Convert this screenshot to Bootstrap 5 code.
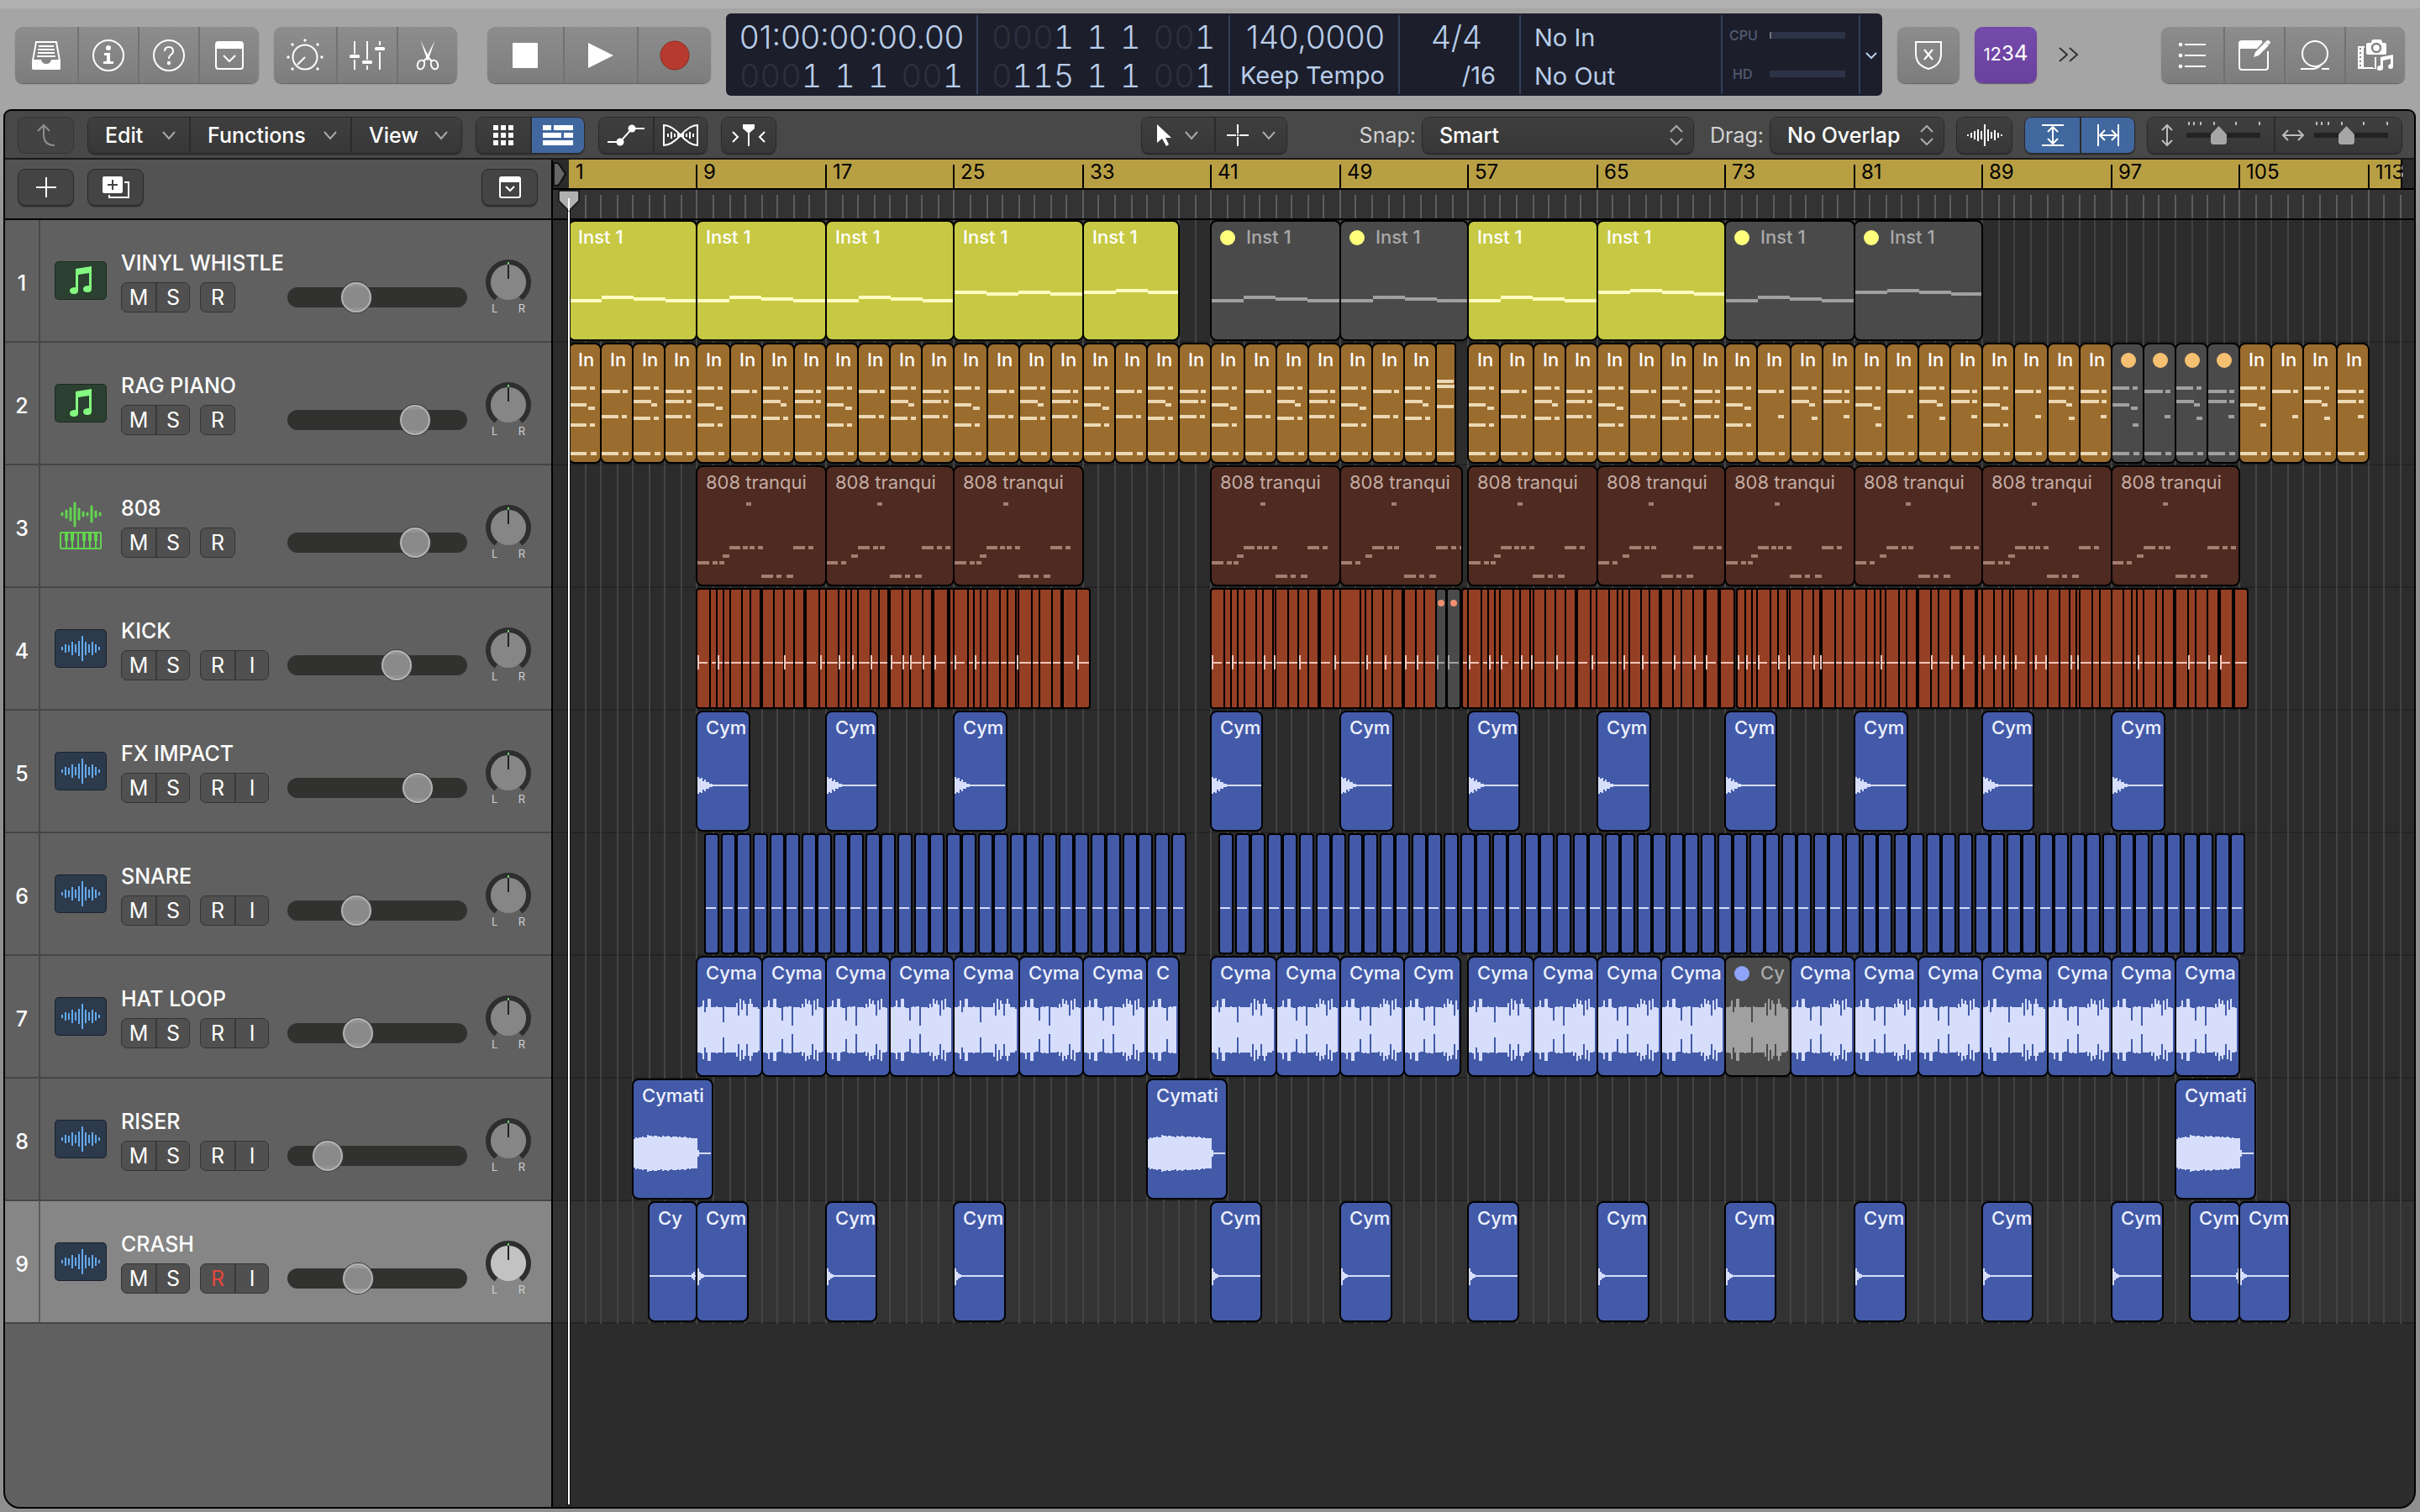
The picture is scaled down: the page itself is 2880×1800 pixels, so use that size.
<!DOCTYPE html>
<html lang="en">
<head>
<meta charset="utf-8">
<meta name="viewport" content="width=device-width, initial-scale=1">
<title>Arrangement</title>
<link href="https://cdn.jsdelivr.net/npm/bootstrap@5.3.0/dist/css/bootstrap.min.css" rel="stylesheet">
<style>
body{font-family:Inter,"Liberation Sans",sans-serif;font-size:25px;line-height:30px;color:#fff;background:linear-gradient(#b1b1b1 10px,#a5a5a5 10px,#a5a5a5 130px,#8f8f8f 300px);overflow:hidden}
button{font:inherit;color:inherit;padding:0;border:0;background:none}
svg{display:block;flex:none;overflow:visible}
.ln{fill:none;stroke:currentColor;stroke-width:2}
.fl{fill:currentColor;stroke:none}

/* control bar */
.controlbar{height:130px;padding:16px 18px 0;gap:18px}
.cluster{height:67px;margin-top:16px;border-radius:9px;background:linear-gradient(#8d8d8d,#7d7d7d);box-shadow:0 1px 1px #5e5e5e;overflow:hidden}
.cluster button{width:72px;height:67px;display:flex;align-items:center;justify-content:center}
.cluster button:first-child{width:74px}
.cluster button+button{border-left:2px solid #717171}
.cluster.transport{margin-left:18px}
.cluster.transport button{width:88px}
.cluster.transport button:first-child{width:90px}
.cluster.purple{background:linear-gradient(#744aab,#6a409f)}
.n1{font-size:20px}.n2{font-size:22px}.n3{font-size:24px}.n4{font-size:26px}
.more{margin:31px 0 0 8px;color:#333}
.lcd{height:98px;border-radius:6px;background:#1c1e2b;color:#b9cde8;font-weight:300}
.lcd>div{height:94px;margin:2px 0;padding-top:3px;border-right:2px solid #33405a;display:flex;flex-direction:column;justify-content:center}
.lcd>div:last-child{border:0}
.lcd .wide{width:300px}
.lcd .tempo{width:202px}
.lcd .sig{width:144px;padding-right:28px}
.lcd .midi-io{width:240px;padding-top:5px}
.lcd .load{width:164px;padding-top:0}
.lcd .fold{width:26px}
.lcdline{height:46px;line-height:46px;font-size:38px;display:flex;white-space:nowrap}
.lcdline.txt{font-size:29px;font-weight:400}
.lcdline.num{gap:15px;font-variant-numeric:tabular-nums}
.ghost{color:#2d303e}
.meterlabel{font-size:16px;width:48px;color:#535d74;font-weight:500}
.meterbar{width:90px;height:8px;background:#2c3346}

/* window and its toolbar */
.win{margin:0 5px 4px 4px;border:2px solid #000;border-radius:9px 9px 20px 20px;overflow:hidden;background:#2d2d2d;min-height:0}
.toolbar{height:58px;padding:2px 15px 0 16px;gap:18px;background:#484848;border-bottom:2px solid #1a1a1a;flex:none}
.keys{height:42px;border-radius:8px;background:linear-gradient(#3f3f3f,#373737);box-shadow:0 0 0 1px #2a2a2a,0 2px 2px #222;overflow:hidden;display:flex;flex:none}
.keys>*{height:42px;display:flex;align-items:center;justify-content:center}
.keys>*+*{border-left:2px solid #2b2b2b}
.keys .on{background:#41679f}
.keys.dim{background:#434343;color:#8e8e8e;box-shadow:0 0 0 1px #363636}
.w64 button{width:64px}
.w65 button{width:65px}
.tools{margin-right:69px}
.tools button{width:86px}
.chev{color:#a9a9a9}
.pick{position:relative}
.pick.snap{width:322px}
.pick.drag{width:206px}
.pick select{appearance:none;width:100%;border:0;background:none;color:#fff;padding:0 20px;font:inherit;font-weight:500}
.pick option{color:#000}
.pick svg{position:absolute;right:12px;top:9px;height:24px;border:0;pointer-events:none}
.keylabel{color:#d2d2d2}
.zoomer{width:150px;gap:16px;padding-right:16px;color:#bdbdbd}
.keys .zoomer{justify-content:flex-end}
.zoomer+.zoomer{width:152px;gap:12px}
.zoomer .scale{position:relative;width:88px;height:42px}
.zoomer .scale svg{position:absolute;left:0;top:5px}
.zoomer input{appearance:none;position:absolute;left:0;top:9px;width:88px;height:24px;background:linear-gradient(#222,#222) center/100% 6px no-repeat;margin:0}
.zoomer input::-webkit-slider-thumb{appearance:none;width:19px;height:22px;background:#a6a6a6;clip-path:polygon(50% 0,100% 45%,100% 90%,90% 100%,10% 100%,0 90%,0 45%)}

/* track headers */
.headers{width:652px;border-right:2px solid #000;background:#606060;flex:none}
.headtop{height:72px;padding:0 17px 5px 16px;gap:18px;background:#535353;border-bottom:2px solid #000}
.headtop .keys{background:#444}
.strip{height:146px;border-bottom:2px solid #464646}
.strip.sel{background:#868686}
.strip .idx{width:42px;padding-top:5px;border-right:2px solid #464646}
.sel .idx{border-right-color:#5c5c5c}
.badgebox{width:60px;height:44px;margin:50px 18px 0;border-radius:4px}
.badgebox.midi{background:#2b4030;color:#84fb80;box-shadow:0 0 0 1px #1d2b20}
.badgebox.audio{background:#2c3a4c;color:#64a9ee;box-shadow:0 0 0 1px #1b222c}
.badgebox.synth{color:#62d44f}
.info{width:198px;padding-top:36px}
.tname{height:30px;font-weight:500;white-space:nowrap}
.msr{margin-top:8px;gap:12px}
.msr>div{display:flex;border:1px solid #343434;border-radius:7px;background:#505050;overflow:hidden}
.msr button{width:40px;height:34px}
.msr button+button{border-left:2px solid #393939}
.msr .armed{color:#e8463c}
.vol{appearance:none;position:relative;width:214px;height:36px;margin:74px 22px 0 0;background:none}
.vol::before{content:"";position:absolute;left:0;right:0;top:6px;height:24px;border-radius:12px;background:#31322f}
.vol::-webkit-slider-runnable-track{height:36px}
.vol::-webkit-slider-thumb{appearance:none;position:relative;width:36px;height:36px;border-radius:50%;background:rgba(160,160,160,.8);border:2px solid #b4b4b4;box-shadow:0 0 0 1px #3c3c3c}
.pan{margin-top:46px;width:54px}
.pan .lr{display:flex;justify-content:space-between;padding:0 7px;font-size:13px;line-height:14px;color:#d0d0d0}

/* timeline */
.arrange{position:relative;overflow:hidden;background:#2c2c2c;min-width:0}
.ruler{height:72px;border-bottom:2px solid #000;background:#333}
.cyclerow{height:36px;border-bottom:2px solid #000;background:#2a2a2a}
.lead-in{width:19px;flex:none}
.cyclebar{position:relative;height:34px;background:#b89f44;margin-right:14px;border-right:2px solid #000;color:#000;font-size:24px}
.cyclebar span{position:absolute;top:0;height:28px;line-height:18px;margin:6px 0 0 -1px;padding-left:7px;border-left:2px solid #000}
.cyclebar span:first-child{border-color:transparent}
.cyclebar span:last-child{color:transparent;background:linear-gradient(90deg,#000 38px,#aaa 38px);-webkit-background-clip:text;background-clip:text}
.ticks{height:34px;padding-left:19px}
.lane{position:relative;height:146px;border-bottom:2px solid #232323;padding-left:19px}
.lane.sel{background:#333}
.region{position:absolute;top:0;height:144px;border:2px solid #000;border-radius:8px;overflow:hidden;font-size:22px;font-weight:500;line-height:22px;padding:7px 0 0 10px;white-space:nowrap}
.region svg{position:absolute;left:0;top:0}
.region i{display:inline-block;width:18px;height:18px;border-radius:50%;margin-right:13px;vertical-align:-2px}
.yellow{background:#c7c944;color:#fff;--n:#fffec0;--d:#ffff7c}
.brown{background:#9a6c2d;color:#fff;--n:#ecd8b4;--d:#f6c072}
.maroon{background:#4e2a20;color:#c4aca4;font-weight:400;--n:#a47c70}
.rust{background:#953f25;--n:#f3c6b8;--d:#f09070}
.blue{background:#435aa8;color:#eef2ff;--n:#d6defc;--d:#8ea4f6}
.muted{background:rgba(76,76,76,.93);color:#a9a9a9;--n:#a0a0a0}
.muted i{background:var(--d)}
.narrow{border-radius:4px}
.playhead{position:absolute;left:5px;top:36px;bottom:3px;width:28px;z-index:3;pointer-events:none}
.playhead::after{content:"";position:absolute;left:13px;top:22px;bottom:0;width:2px;background:#fff;box-shadow:0 0 0 1px #111}
.playhead svg{position:relative;z-index:1}
</style>
<script src="https://cdn.jsdelivr.net/npm/bootstrap@5.3.0/dist/js/bootstrap.bundle.min.js"></script>
</head>
<body class="d-flex flex-column vh-100">

<header class="controlbar d-flex align-items-start flex-shrink-0">
  <div class="cluster d-flex">
    <button aria-label="Library"><svg width="36" height="36" viewBox="0 0 36 36"><path class="ln" d="M6 2h24l4 22v8q0 2-2 2H4q-2 0-2-2v-8z"/><path class="fl" d="M1 23h11q1 5 6 5t6-5h11v10q0 2-2 2H3q-2 0-2-2z"/><path class="ln" d="M9 7h18M8 11h20M8 15h20M7 19h22"/></svg></button>
    <button aria-label="Inspector"><svg width="40" height="40" viewBox="0 0 40 40"><circle class="ln" cx="20" cy="20" r="18"/><circle class="fl" cx="20" cy="11" r="3"/><path class="fl" d="M15 17h7v10h4v3H14v-3h4v-7h-3z"/></svg></button>
    <button aria-label="Quick Help"><svg width="40" height="40" viewBox="0 0 40 40"><circle class="ln" cx="20" cy="20" r="18"/><path class="ln" d="M15 15q0-5 5-5t5 5q0 2.500-3 4.500-2 1.500-2 4.500"/><circle class="fl" cx="20" cy="29" r="2.200"/></svg></button>
    <button aria-label="Toolbar"><svg width="36" height="36" viewBox="0 0 36 36"><rect class="ln" x="2" y="2" width="32" height="32" rx="3"/><path class="fl" d="M2 3h32v7H2z"/><path class="ln" d="M11 18l7 7 7-7"/></svg></button>
  </div>
  <div class="cluster d-flex">
    <button aria-label="Smart Controls"><svg width="44" height="44" viewBox="0 0 44 44"><circle class="ln" cx="22" cy="24" r="14.500"/><path class="ln" d="M22 24l-9 9"/><g class="fl"><circle cx="22" cy="4" r="1.700"/><circle cx="7" cy="9" r="1.700"/><circle cx="37" cy="9" r="1.700"/><circle cx="2" cy="24" r="1.700"/><circle cx="42" cy="24" r="1.700"/><circle cx="7" cy="38" r="1.700"/><circle cx="37" cy="38" r="1.700"/></g></svg></button>
    <button aria-label="Mixer"><svg width="42" height="36" viewBox="0 0 42 36"><path class="ln" d="M6 1v15M6 23v12M21 1v22M21 30v5M36 1v5M36 14v21"/><g class="fl"><rect y="17" width="12" height="4" rx="1.500"/><rect x="15" y="24" width="12" height="4" rx="1.500"/><rect x="30" y="8" width="12" height="4" rx="1.500"/></g></svg></button>
    <button aria-label="Editors"><svg width="28" height="36" viewBox="0 0 28 36"><path class="fl" d="M5.500 0l10 20-2 4zM22.500 0l-8 24-3-2z"/><ellipse class="ln" cx="6" cy="29" rx="4" ry="5.500" transform="rotate(20 6 29)"/><ellipse class="ln" cx="22" cy="29" rx="4" ry="5.500" transform="rotate(-20 22 29)"/><path class="ln" d="M9 25l5-5 5 5"/></svg></button>
  </div>
  <div class="cluster transport d-flex">
    <button aria-label="Stop"><svg width="30" height="30"><rect class="fl" width="30" height="30" rx="1"/></svg></button>
    <button aria-label="Play"><svg width="30" height="30" viewBox="0 0 30 30"><path class="fl" d="M0 0l30 15L0 30z"/></svg></button>
    <button aria-label="Record"><svg width="36" height="36"><circle cx="18" cy="18" r="17" fill="#b73a2e" stroke="#8c2c22"/></svg></button>
  </div>
  <div class="lcd d-flex">
    <div class="wide ps-3">
      <span class="lcdline">01:00:00:00.00</span>
      <span class="lcdline num"><span><span class="ghost">000</span>1</span><span>1</span><span>1</span><span><span class="ghost">00</span>1</span></span>
    </div>
    <div class="wide ps-3">
      <span class="lcdline num"><span><span class="ghost">000</span>1</span><span>1</span><span>1</span><span><span class="ghost">00</span>1</span></span>
      <span class="lcdline num"><span><span class="ghost">0</span>115</span><span>1</span><span>1</span><span><span class="ghost">00</span>1</span></span>
    </div>
    <div class="tempo align-items-end pe-3"><span class="lcdline">140,0000</span><span class="lcdline txt">Keep Tempo</span></div>
    <div class="sig align-items-end"><span class="lcdline pe-3">4/4</span><span class="lcdline txt">/16</span></div>
    <div class="midi-io ps-3"><span class="lcdline txt">No In</span><span class="lcdline txt">No Out</span></div>
    <div class="load ps-2">
      <span class="lcdline align-items-center"><span class="meterlabel">CPU</span><span class="meterbar border-start border-2 border-secondary"></span></span>
      <span class="lcdline align-items-center"><span class="meterlabel ps-1">HD</span><span class="meterbar"></span></span>
    </div>
    <div class="fold align-items-center"><svg width="14" height="9" viewBox="0 0 14 9"><path class="ln" d="M1 1l6 6 6-6"/></svg></div>
  </div>
  <div class="cluster"><button aria-label="Replace"><svg width="36" height="36" viewBox="0 0 36 36"><path class="ln" d="M3 2h30v14q0 14-15 18Q3 30 3 16z"/><path class="ln" d="M13 11l10 12M23 11L13 23"/></svg></button></div>
  <div class="cluster purple"><button class="align-items-baseline pt-3" aria-label="Count In"><span class="n1">1</span><span class="n2">2</span><span class="n3">3</span><span class="n4">4</span></button></div>
  <button class="more" aria-label="More"><svg width="24" height="36" viewBox="0 0 24 36"><path class="ln" d="M1 10l9 8-9 8M13 10l9 8-9 8"/></svg></button>
  <div class="cluster d-flex ms-auto">
    <button aria-label="List Editors"><svg width="34" height="32" viewBox="0 0 34 32"><path class="ln" d="M8 3h25M8 16h25M8 29h25"/><circle class="fl" cx="3" cy="3" r="2.300"/><circle class="fl" cx="3" cy="16" r="2.300"/><circle class="fl" cx="3" cy="29" r="2.300"/></svg></button>
    <button aria-label="Notepad"><svg width="38" height="36" viewBox="0 0 38 36"><path class="ln" d="M35 13v19q0 3-3 3H4q-3 0-3-3V4q0-3 3-3h24"/><path class="fl" d="M1 2h28l-7 8H1z"/><path class="fl" d="M18 20l2-6L32 2l4 4-12 12zM33 1q2-2 4 0t0 3l-1 1-4-3z"/></svg></button>
    <button aria-label="Loop Browser"><svg width="36" height="36" viewBox="0 0 36 36"><circle class="ln" cx="18" cy="16" r="15"/><path class="ln" d="M1 34h15q7-1 10-6M26 34h9"/></svg></button>
    <button aria-label="Browsers"><svg width="42" height="38" viewBox="0 0 42 38"><path class="fl" d="M0 8h8v2H7v23h13V21h2v14H0zM12 4h4q0-4 3-4h7q3 0 3 4h3q2 0 2 2v10q0 2-2 2H12q-2 0-2-2V6q0-2 2-2z"/><path stroke="#848484" stroke-width="2" stroke-dasharray="2 3" d="M3 10v24M19 22v12"/><circle cx="22" cy="10" r="5" fill="none" stroke="#848484" stroke-width="2.500"/><path class="fl" d="M27 21l15-3v14q0 3-3 3t-3-3q0-2 3-3v-6l-9 2v9q0 3-4 3t-3-3q0-3 4-3z"/></svg></button>
  </div>
</header>

<main class="win d-flex flex-column flex-fill">
  <nav class="toolbar d-flex align-items-center" aria-label="Tracks area">
    <div class="keys dim w65"><button aria-label="Up"><svg width="22" height="28" viewBox="0 0 22 28"><path class="ln" d="M1 9l7-7 7 7M8 3v10q0 13 13 13"/></svg></button></div>
    <div class="keys" id="menus"></div>
    <div class="keys w64">
      <button aria-label="Live Loops"><svg width="24" height="24" class="fl"><path d="M0 0h6v6H0zM9 0h6v6H9zM18 0h6v6h-6zM0 9h6v6H0zM9 9h6v6H9zM18 9h6v6h-6zM0 18h6v6H0zM9 18h6v6H9zM18 18h6v6h-6z"/></svg></button>
      <button class="on" aria-label="Tracks View"><svg width="36" height="24" class="fl"><path d="M0 0h10v6H0zM13 0h23v6H13zM0 9h22v6H0zM25 9h11v6H25zM0 18h36v6H0z"/></svg></button>
    </div>
    <div class="keys w64">
      <button aria-label="Automation"><svg width="44" height="26" viewBox="0 0 44 26"><path class="ln" d="M0 21h15L29 5h15"/><circle class="fl" cx="15" cy="21" r="4.500"/><circle class="fl" cx="29" cy="5" r="4.500"/></svg></button>
      <button aria-label="Flex"><svg width="42" height="26" viewBox="0 0 42 26"><path class="ln" d="M1 25V1q9 0 20 12t20 12V1Q32 1 21 13T1 25zM6 11v4M10 9v8M14 11v4M28 11v4M32 9v8M36 11v4M18 9v8M24 9v8"/></svg></button>
    </div>
    <div class="keys w64"><button aria-label="Catch Playhead"><svg width="40" height="26" viewBox="0 0 40 26"><path class="ln" d="M1 9l6 6-6 6M39 9l-6 6 6 6M20 8v18"/><path class="fl" d="M13 0h14v5l-7 6-7-6z"/></svg></button></div>

    <div class="keys tools ms-auto">
      <button class="gap-3" aria-label="Left-click tool"><svg width="17" height="26" viewBox="0 0 17 26"><path class="fl" d="M0 0l17 16h-7l4 8-3 2-5-9-6 5z"/></svg><svg class="chev" width="16" height="10" viewBox="0 0 16 10"><path class="ln" d="M1 1l7 8 7-8"/></svg></button>
      <button class="gap-3" aria-label="Command-click tool"><svg width="26" height="26" viewBox="0 0 26 26"><path class="ln" d="M0 13h11M15 13h11M13 0v11M13 15v11M12 13h2"/></svg><svg class="chev" width="16" height="10" viewBox="0 0 16 10"><path class="ln" d="M1 1l7 8 7-8"/></svg></button>
    </div>

    <div class="d-flex align-items-center gap-3">
      <div class="d-flex align-items-center gap-2"><label for="snap" class="keylabel">Snap:</label>
        <div class="keys pick snap"><select id="snap"><option>Smart</option></select><svg class="chev" width="16" height="24" viewBox="0 0 16 24"><path class="ln" d="M1 8l7-7 7 7M1 16l7 7 7-7"/></svg></div></div>
      <div class="d-flex align-items-center gap-2 ms-1"><label for="drag" class="keylabel">Drag:</label>
        <div class="keys pick drag"><select id="drag"><option>No Overlap</option></select><svg class="chev" width="16" height="24" viewBox="0 0 16 24"><path class="ln" d="M1 8l7-7 7 7M1 16l7 7 7-7"/></svg></div></div>
      <div class="keys w65"><button aria-label="Waveform Zoom"><svg width="42" height="26" viewBox="0 0 42 26"><path class="ln" d="M1 12v2M5 10v6M9 8v10M13 6v14M17 8v10M21 0v26M25 6v14M29 9v8M33 7v12M37 10v6M41 12v2"/></svg></button></div>
      <div class="keys w65">
        <button class="on" aria-label="Vertical Auto Zoom"><svg width="26" height="26" viewBox="0 0 26 26"><path class="ln" d="M0 1h26M0 25h26M13 4v18M7 9l6-6 6 6M7 17l6 6 6-6"/></svg></button>
        <button class="on" aria-label="Horizontal Auto Zoom"><svg width="26" height="26" viewBox="0 0 26 26"><path class="ln" d="M1 0v26M25 0v26M4 13h18M9 7l-6 6 6 6M17 7l6 6-6 6"/></svg></button>
      </div>
      <div class="keys">
        <div class="zoomer"><svg width="14" height="26" viewBox="0 0 14 26"><path class="ln" d="M7 2v22M1 7l6-6 6 6M1 19l6 6 6-6"/></svg><div class="scale"><svg width="88" height="4" class="fl"><path d="M2 0h2v4H2zM8 0h2v4H8zM16 0h2v4h-2zM32 0h2v4h-2zM58 0h2v4h-2zM86 0h2v4h-2z"/></svg><input type="range" value="42" aria-label="Vertical zoom"></div></div>
        <div class="zoomer"><svg width="26" height="14" viewBox="0 0 26 14"><path class="ln" d="M2 7h22M7 1L1 7l6 6M19 1l6 6-6 6"/></svg><div class="scale"><svg width="88" height="4" class="fl"><path d="M2 0h2v4H2zM8 0h2v4H8zM16 0h2v4h-2zM32 0h2v4h-2zM58 0h2v4h-2zM86 0h2v4h-2z"/></svg><input type="range" value="42" aria-label="Horizontal zoom"></div></div>
      </div>
    </div>
  </nav>

  <div class="d-flex flex-fill overflow-hidden">
    <aside class="headers">
      <div class="headtop d-flex align-items-center">
        <div class="keys w65"><button aria-label="New Tracks"><svg width="24" height="24" viewBox="0 0 24 24"><path class="ln" d="M12 0v24M0 12h24"/></svg></button></div>
        <div class="keys w65"><button aria-label="Duplicate Track"><svg width="32" height="26" viewBox="0 0 32 26"><rect class="fl" width="24" height="20" rx="2"/><path d="M12 4v12M6 10h12" stroke="#444" stroke-width="2"/><path class="ln" d="M26 7h5v18H8v-3"/></svg></button></div>
        <div class="keys w65 ms-auto"><button aria-label="Header Configuration"><svg width="26" height="26" viewBox="0 0 26 26"><rect class="ln" x="1" y="1" width="24" height="24" rx="2"/><path class="fl" d="M1 1h24v6H1z"/><path class="ln" d="M8 12l5 5 5-5"/></svg></button></div>
      </div>
      <div id="strips"></div>
    </aside>
    <section class="arrange flex-fill" aria-label="Timeline">
      <div class="ruler">
        <div class="cyclerow d-flex"><div class="lead-in"><svg width="18" height="34" viewBox="0 0 18 34"><path d="M1 4h3q3 0 5 4l6 9-6 10q-2 4-5 4H1z" fill="#666" stroke="#111" stroke-width="2"/></svg></div><div class="cyclebar flex-fill" id="bars"></div></div>
        <div class="ticks" id="ticks"></div>
      </div>
      <div id="lanes"></div>
      <div class="playhead"><svg width="28" height="26" viewBox="0 0 28 26"><path d="M2 3q0-2 2-2h20q2 0 2 2v10L14 25 2 13z" fill="#b0b0b0" stroke="#111" stroke-width="1.500"/><path d="M14 10v15" stroke="#fff" stroke-width="2"/></svg></div>
    </section>
  </div>
</main>

<script>
const $ = id => document.getElementById(id);

/* menus */
const chev = '<svg class="chev" width="16" height="10" viewBox="0 0 16 10"><path class="ln" d="M1 1l7 8 7-8"/></svg>';
$('menus').innerHTML = [['Edit',120],['Functions',192],['View',132]].map(([t,w]) =>
  `<button class="justify-content-between px-3 fw-medium" style="width:${w}px"><span class="ps-1">${t}</span>${chev}</button>`).join('');

/* track headers: name, kind, volume 0-100 */
const wave = '<svg width="48" height="32" viewBox="0 0 48 32"><path class="ln" d="M2 14v4M6 11v10M10 12v8M14 8v16M18 11v10M22 7v18M26 1v30M30 8v16M34 11v10M38 8v16M42 11v10M46 14v4"/></svg>';
const icons = {
  midi:'<svg width="26" height="34" viewBox="0 0 26 34"><path class="fl" d="M7 3L26 0v27q0 4-5 4t-5-4q0-4 7-4V8L10 10v19q0 4-5 4t-5-4q0-4 7-4z"/></svg>',
  audio:wave,
  synth:'<svg width="50" height="58" viewBox="0 0 50 58"><path fill="none" stroke="currentColor" stroke-width="3" stroke-linecap="round" d="M3 14v2M8 11v8M13 8v14M18 2v27M23 9v12M28 13v4M33 14v2M38 6v18M43 12v6M48 14v2"/><rect class="ln" x="1" y="37" width="48" height="19" rx="1"/><path class="ln" d="M8 37v19M15 37v19M22 37v19M29 37v19M36 37v19M43 37v19"/><path stroke="currentColor" stroke-width="4" d="M8 37v10M15 37v10M29 37v10M36 37v10M43 37v10"/></svg>'
};
const tracks = [['VINYL WHISTLE','midi',36],['RAG PIANO','midi',75],['808','synth',75],['KICK','audio',63],['FX IMPACT','audio',77],['SNARE','audio',36],['HAT LOOP','audio',37],['RISER','audio',17],['CRASH','audio',37]];
$('strips').innerHTML = tracks.map(([n,k,v],i) => {
  const sel = i === 8;
  return `<div class="strip d-flex align-items-start ${sel?'sel':''}">
  <div class="idx h-100 d-flex align-items-center justify-content-center fw-medium">${i+1}</div>
  <div class="badgebox ${k} d-flex align-items-center justify-content-center flex-shrink-0">${icons[k]}</div>
  <div class="info"><div class="tname">${n}</div><div class="msr d-flex">
    <div><button aria-label="Mute">M</button><button aria-label="Solo">S</button></div>
    <div><button class="${sel?'armed':''}" aria-label="Record enable">R</button>${k==='audio'?'<button aria-label="Input monitoring">I</button>':''}</div></div></div>
  <input class="vol" type="range" value="${v}" aria-label="${n} volume">
  <div class="pan"><svg width="54" height="52" viewBox="0 0 54 52"><path d="M12.500 47.200A24 24 0 1 1 41.500 47.200" fill="none" stroke="#2e2e2e" stroke-width="6"/><circle cx="27" cy="28" r="21" fill="${sel?'#c2c2c2':'#868686'}"/><path d="M27 7v17" stroke="#222" stroke-width="2"/><path d="M27 4v3" stroke="#6fd070" stroke-width="2"/></svg><div class="lr"><span>L</span><span>R</span></div></div></div>`;
}).join('');

/* timeline scale: a bar is 19.12 px, snapped to the 2 px grid; bar 1 sits 19 px into the lane */
const off = b => 2*Math.round((b-1)*9.56);
const X = b => 19 + off(b);
let labels = '', tickPath = '', gridPath = '';
for (let b=1;b<=113;b+=8) labels += `<span style="left:${off(b)}px">${b}</span>`;
for (let b=2;b<=115;b++){
  tickPath += b%8===1 ? `M${off(b)} 0v34` : `M${off(b)} 6v28`;
  gridPath += `M${off(b)} 0v146`;
}
$('bars').innerHTML = labels;
$('ticks').innerHTML = `<svg width="1" height="34"><path stroke="#5d5d5d" stroke-width="2" d="${tickPath}"/></svg>`;

const rects = (list,h=4) => list.map(([a,b,y]) => `M${a} ${y-h/2}h${b-a}v${h}h${a-b}z`).join('');
const art = d => `<svg width="1" height="140"><path fill="var(--n)" d="${d}"/></svg>`;
function region(x,w,cls,text,d,muted){
  return `<div class="region ${cls} ${muted?'muted':''}" style="left:${x-1}px;width:${w+2}px">${muted?'<i></i>':''}${text}${art(d)}</div>`;
}
const span = (a,b) => X(b)-X(a);
const out = tracks.map(() => '');

/* 1: whistle */
const whistle = {A:[94,90,92,94],B:[84,86,84,86],C:[84,82,84,86]};
[[1,'A'],[9,'A'],[17,'A'],[25,'B'],[33,'C',6],[41,'A',8,1],[49,'A',8,1],[57,'A'],[65,'C'],[73,'A',8,1],[81,'C',8,1]].forEach(([b,p,n=8,m]) =>
  out[0] += region(X(b),span(b,b+n),'yellow','Inst 1',rects(whistle[p].map((y,i)=>[i*38,i*38+38,y])),m));

/* 2: piano */
const two = (y,e=20,s=24,f=30) => [[0,e,y],[s,f,y]];
function piano(k,late){
  const low = two(130,20,25,32), t = y => late ? [[24,31,y]] : two(y);
  return [
    [...two(52),[0,20,72],[22,30,76],...t(96),...low],
    [...two(56,22,25,31),...t(86),...low],
    [...two(52),[0,21,68],[21,28,72],...t(88),...low],
    [...two(56,22,25,31),...two(68,22,25,31),...t(86),...low]][k];
}
for (let b=1;b<=111;b+=2){
  if (b===55){ out[1] += region(X(55),23,'brown narrow','',rects([[0,20,44],[0,23,50],[0,20,74],[0,20,130]])); continue; }
  const m = b>=97 && b<=103;
  out[1] += region(X(b),span(b,b+2),'brown',m?'':'In',rects(piano((b-1)/2%4, b>=75 && b!==89)),m);
}

/* 3: 808 */
const bassA = [[58,64,44],[0,14,114],[18,24,114],[26,32,114],[30,38,106],[38,51,96],[54,60,96],[62,68,96],[72,78,96],[114,128,96],[132,138,96],[76,90,130],[94,100,130],[106,114,130]];
const bassB = [[60,66,44],[0,13,114],[17,23,114],[29,37,106],[37,51,96],[55,61,96],[63,69,96],[113,127,96],[131,137,96],[141,147,96],[75,89,130],[93,99,130],[105,113,130]];
[9,17,25,41,49,57,65,73,81,89,97].forEach(b => out[2] += region(X(b),b===49?145:span(b,b+8),'maroon','808 tranqui',rects((b-1)/8%2?bassA:bassB)));

/* 4: kick slices; positions are window x, offset to the lane */
const O = 658;
function slices(a,b,cuts,wide,hits,gaps){
  let d = `M0 86h${b-a-4}v2H0z`;
  const cut = cuts.map(c=>`M${c-a-2} 0v140`).join(''), w = wide.map(c=>`M${c-a-2} 0v140`).join('');
  const hit = hits.map(h=>`M${h-a-2} 78v17`).join(''), gap = gaps.map(g=>`M${g-a-4} 87h5`).join('');
  return `<div class="region rust narrow" style="left:${a-O}px;width:${b-a}px"><svg width="1" height="140"><path fill="var(--n)" d="${d}"/><path stroke="#953f25" stroke-width="3" d="${gap}"/><path stroke="#000" stroke-width="2" d="${cut}"/><path stroke="#000" stroke-width="4" d="${w}"/><path stroke="var(--n)" stroke-width="2" d="${hit}"/></svg></div>`;
}
out[3] += slices(828,1298,[845,853,861,869,883,893,921,933,945,975,983,998,1007,1013,1021,1036,1046,1074,1083,1098,1135,1152,1159,1167,1175,1190,1199,1209,1212,1228,1237,1252,1281],[906,958,1058,1110,1129,1264],[831,855,934,977,999,1015,1037,1061,1075,1084,1099,1113,1137,1161,1211,1283],[844,973,1127,1150,1279]);
out[3] += slices(1440,1711,[1457,1465,1473,1481,1495,1503,1515,1518,1533,1545,1557,1587,1595,1619,1625,1633,1646,1657,1685,1695],[1570,1670],[1443,1467,1505,1517,1547,1589,1627,1649,1673,1687],[1456,1585]);
[[1708,14],[1721,18]].forEach(([x,w]) => out[3] += `<div class="region rust muted narrow" style="left:${x-O}px;width:${w}px"><svg width="1" height="140"><circle cx="${w/2-2}" cy="16" r="4" fill="var(--d)"/><path fill="var(--n)" d="M0 78h2v8h${w-7}v2H2v7H0z"/></svg></div>`);
out[3] += slices(1739,2065,[1747,1763,1771,1779,1785,1801,1809,1821,1825,1839,1851,1863,1893,1900,1915,1925,1931,1939,1953,1963,1991,2001,2015],[1876,1976,2029,2046],[1749,1773,1787,1811,1823,1853,1895,1933,1955,1993,2017,2031],[1762,1797,1891,2044]);
out[3] += slices(2066,2676,[2077,2085,2091,2107,2116,2127,2130,2145,2158,2166,2168,2184,2193,2207,2221,2231,2238,2244,2260,2269,2298,2307,2321,2359,2373,2383,2392,2396,2414,2420,2437,2451,2463,2471,2475,2490,2499,2513,2527,2537,2543,2551,2566,2574,2604,2613,2627],[2282,2334,2352,2588,2641,2658],[2069,2079,2093,2117,2129,2159,2167,2239,2299,2323,2337,2361,2375,2385,2399,2423,2435,2465,2473,2545,2605,2629,2643],[2105,2350,2412,2656]);

/* mirrored waveform, one column per 2 px */
const mirror = (hs,c,x0=0) => hs.map((h,i)=>`M${x0+i*2} ${c-h}h2v${2*h}h-2z`).join('');

/* 5 and 9: impacts and crashes on every eighth bar */
[9,17,25,41,49,57,65,73,81,89,97].forEach((b,i) => {
  out[4] += region(X(b),i%2?61:63,'blue','Cym',mirror([10,8,9,5,7,4,4,2,2],87)+'M18 86h42v2H18z');
  out[8] += region(X(b),i%2?60:61,'blue','Cym',mirror([9,5,3,2],87)+'M8 86h50v2H8zM0 86h2v12H0z');
});
out[8] += region(X(6)-1,span(6,9)+1,'blue','Cy','M0 86h56v2H0z'+mirror([3,5],87,50));
out[8] += region(X(102)-3,span(102,105)+3,'blue','Cym','M0 86h58v2H0z'+mirror([4,9,6],87,54));
out[8] += region(X(105),60,'blue','Cym',mirror([9,5,3,2],87)+'M8 86h50v2H8zM0 86h2v12H0z');

/* 6: snare on every bar */
for (let n=0;n<94;n++){
  const b = n<30 ? 9.5+n : 11.5+n;
  out[5] += region(X(b),16,'blue narrow','','M0 86h12v2H0z');
}

/* 7: hats */
const hatA=[27,27,28,35,21,27,37,37,27,27,27,28,27,27,27,9,28,27,27,27,27,27,27,32,17,37,24,35,31,17,31,37,31,27,27,27,25];
const hatB=[27,27,28,35,27,27,37,37,27,26,26,11,27,28,27,28,28,5,27,27,27,27,26,31,27,37,31,35,30,17,35,24,37,27,27,26,25];
const hats = [9,13,17,21,25,29,33,37,41,45,49,53,57,61,65,69,73,77,81,85,89,93,97,101];
hats.forEach(b => {
  const w = b===37 ? span(37,39) : b===53 ? 67 : span(b,b+4), m = b===73;
  out[6] += region(X(b),w,'blue',b===37?'C':b===53?'Cym':m?'Cy':'Cyma',mirror(((b-9)%16?hatB:hatA).slice(0,(w-3)/2|0),86),m);
});

/* 8: risers */
[5,37,101].forEach(b => out[7] += region(X(b),95,'blue','Cymati',mirror([17,19,18,19,19,20,19,19,22,21,21,20,21,21,20,20,19,21,20,20,21,20,19,20,20,20,19,20,19,19,20,19,18,19,18,18,18,18,4],87)+'M78 86h14v2H78z'));

const grid = `<svg width="1" height="144"><path stroke="#434343" stroke-width="2" d="${gridPath}"/></svg>`;
$('lanes').innerHTML = out.map((h,i) => `<div class="lane ${i===8?'sel':''}">${grid}${h}</div>`).join('');
</script>
</body>
</html>
